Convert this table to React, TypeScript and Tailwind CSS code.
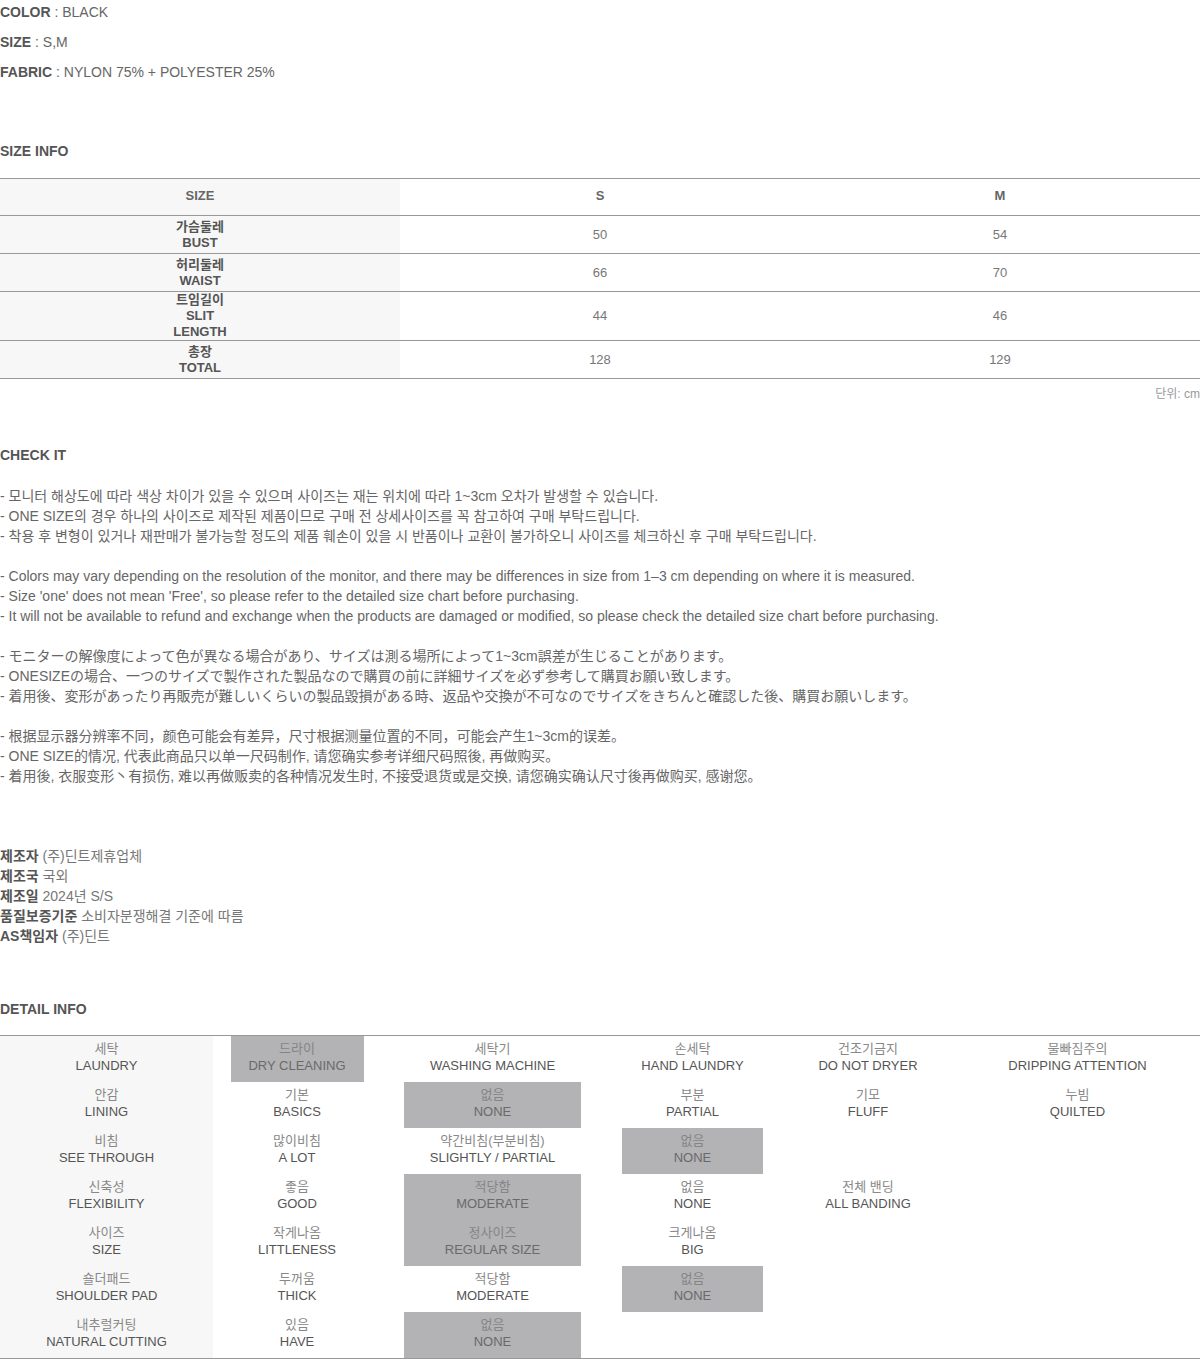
import React from "react";

const KR = "font-['Liberation_Sans','Noto_Sans_CJK_KR',sans-serif]";
const JP = "font-['Liberation_Sans','Noto_Sans_CJK_JP',sans-serif]";
const SC = "font-['Liberation_Sans','Noto_Sans_CJK_SC',sans-serif]";

type SizeRow = { label: string[]; s: string; m: string };
const sizeRows: SizeRow[] = [
  { label: ["가슴둘레", "BUST"], s: "50", m: "54" },
  { label: ["허리둘레", "WAIST"], s: "66", m: "70" },
  { label: ["트임길이", "SLIT", "LENGTH"], s: "44", m: "46" },
  { label: ["총장", "TOTAL"], s: "128", m: "129" },
];

type Cell = { ko: string; en: string; hl?: string } | null;

const detailRows: Cell[][] = [
  [
    { ko: "세탁", en: "LAUNDRY" },
    { ko: "드라이", en: "DRY CLEANING", hl: "w-[133px]" },
    { ko: "세탁기", en: "WASHING MACHINE" },
    { ko: "손세탁", en: "HAND LAUNDRY" },
    { ko: "건조기금지", en: "DO NOT DRYER" },
    { ko: "물빠짐주의", en: "DRIPPING ATTENTION" },
  ],
  [
    { ko: "안감", en: "LINING" },
    { ko: "기본", en: "BASICS" },
    { ko: "없음", en: "NONE", hl: "w-[177px]" },
    { ko: "부분", en: "PARTIAL" },
    { ko: "기모", en: "FLUFF" },
    { ko: "누빔", en: "QUILTED" },
  ],
  [
    { ko: "비침", en: "SEE THROUGH" },
    { ko: "많이비침", en: "A LOT" },
    { ko: "약간비침(부분비침)", en: "SLIGHTLY / PARTIAL" },
    { ko: "없음", en: "NONE", hl: "w-[141px]" },
    null,
    null,
  ],
  [
    { ko: "신축성", en: "FLEXIBILITY" },
    { ko: "좋음", en: "GOOD" },
    { ko: "적당함", en: "MODERATE", hl: "w-[177px]" },
    { ko: "없음", en: "NONE" },
    { ko: "전체 밴딩", en: "ALL BANDING" },
    null,
  ],
  [
    { ko: "사이즈", en: "SIZE" },
    { ko: "작게나옴", en: "LITTLENESS" },
    { ko: "정사이즈", en: "REGULAR SIZE", hl: "w-[177px]" },
    { ko: "크게나옴", en: "BIG" },
    null,
    null,
  ],
  [
    { ko: "숄더패드", en: "SHOULDER PAD" },
    { ko: "두꺼움", en: "THICK" },
    { ko: "적당함", en: "MODERATE" },
    { ko: "없음", en: "NONE", hl: "w-[141px]" },
    null,
    null,
  ],
  [
    { ko: "내추럴커팅", en: "NATURAL CUTTING" },
    { ko: "있음", en: "HAVE" },
    { ko: "없음", en: "NONE", hl: "w-[177px]" },
    null,
    null,
    null,
  ],
];

function DetailCell({ cell, first }: { cell: Cell; first: boolean }) {
  const base = first ? "bg-[#f7f7f7]" : "";
  if (!cell) return <div className={`h-[46px] ${base}`} />;
  const content = (
    <div className="pt-[4px] text-center">
      <div className={`text-[13px] leading-[17px] ${cell.hl ? "text-[#858585]" : "text-[#888]"}`}>{cell.ko}</div>
      <div className={`text-[13px] leading-[17px] ${cell.hl ? "text-[#6a6a6a]" : "text-[#555]"}`}>{cell.en}</div>
    </div>
  );
  if (cell.hl) {
    return (
      <div className={`h-[46px] flex justify-center ${base}`}>
        <div className={`${cell.hl} h-full bg-[#b3b2b4]`}>{content}</div>
      </div>
    );
  }
  return <div className={`h-[46px] ${base}`}>{content}</div>;
}

export default function App() {
  return (
    <div className={`w-[1200px] bg-white text-[#666] ${KR}`}>
      {/* product info */}
      <div className="flex flex-col gap-[6px] text-[14px] leading-[24px] text-[#666]">
        <div><span className="font-bold text-[#555]">COLOR</span> : BLACK</div>
        <div><span className="font-bold text-[#555]">SIZE</span> : S,M</div>
        <div><span className="font-bold text-[#555]">FABRIC</span> : NYLON 75% + POLYESTER 25%</div>
      </div>

      {/* size info */}
      <div className="mt-[57px] text-[14px] leading-[20px] font-bold text-[#555]">SIZE INFO</div>
      <div className="mt-[17px] border-t border-[#999]">
        <div className="grid grid-cols-3 border-b border-[#999] min-h-[37px] items-stretch text-[13px] font-bold text-[#666]">
          <div className="bg-[#f7f7f7] flex items-center justify-center pb-[3px]">SIZE</div>
          <div className="flex items-center justify-center pb-[3px]">S</div>
          <div className="flex items-center justify-center pb-[3px]">M</div>
        </div>
        {sizeRows.map((r, i) => (
          <div key={i} className="grid grid-cols-3 border-b border-[#999] min-h-[38px] items-stretch">
            <div className="bg-[#f7f7f7] flex flex-col items-center justify-center text-[13px] leading-[16px] font-bold text-[#555]">
              {r.label.map((l, j) => (
                <div key={j}>{l}</div>
              ))}
            </div>
            <div className="flex items-center justify-center text-[13px] text-[#777]">{r.s}</div>
            <div className="flex items-center justify-center text-[13px] text-[#777]">{r.m}</div>
          </div>
        ))}
      </div>
      <div className="mt-[7px] text-right text-[12px] leading-[16px] text-[#999]">단위: cm</div>

      {/* check it */}
      <div className="mt-[43px] text-[14px] leading-[20px] font-bold text-[#555]">CHECK IT</div>
      <div className="mt-[21px] text-[14px] leading-[20px] text-[#666]">
        <div>- 모니터 해상도에 따라 색상 차이가 있을 수 있으며 사이즈는 재는 위치에 따라 1~3cm 오차가 발생할 수 있습니다.</div>
        <div>- ONE SIZE의 경우 하나의 사이즈로 제작된 제품이므로 구매 전 상세사이즈를 꼭 참고하여 구매 부탁드립니다.</div>
        <div>- 착용 후 변형이 있거나 재판매가 불가능할 정도의 제품 훼손이 있을 시 반품이나 교환이 불가하오니 사이즈를 체크하신 후 구매 부탁드립니다.</div>
        <div className="h-[20px]" />
        <div>- Colors may vary depending on the resolution of the monitor, and there may be differences in size from 1–3 cm depending on where it is measured.</div>
        <div>- Size 'one' does not mean 'Free', so please refer to the detailed size chart before purchasing.</div>
        <div>- It will not be available to refund and exchange when the products are damaged or modified, so please check the detailed size chart before purchasing.</div>
        <div className="h-[20px]" />
        <div className={JP}>
          <div>- モニターの解像度によって色が異なる場合があり、サイズは測る場所によって1~3cm誤差が生じることがあります。</div>
          <div>- ONESIZEの場合、一つのサイズで製作された製品なので購買の前に詳細サイズを必ず参考して購買お願い致します。</div>
          <div>- 着用後、変形があったり再販売が難しいくらいの製品毀損がある時、返品や交換が不可なのでサイズをきちんと確認した後、購買お願いします。</div>
        </div>
        <div className="h-[20px]" />
        <div className={SC}>
          <div>- 根据显示器分辨率不同，颜色可能会有差异，尺寸根据测量位置的不同，可能会产生1~3cm的误差。</div>
          <div>- ONE SIZE的情况, 代表此商品只以单一尺码制作, 请您确实参考详细尺码照後, 再做购买。</div>
          <div>- 着用後, 衣服变形丶有损伤, 难以再做贩卖的各种情况发生时, 不接受退货或是交换, 请您确实确认尺寸後再做购买, 感谢您。</div>
        </div>
      </div>

      {/* maker */}
      <div className="mt-[60px] text-[14px] leading-[20px] text-[#777]">
        <div><span className="font-bold text-[#555]">제조자</span> (주)딘트제휴업체</div>
        <div><span className="font-bold text-[#555]">제조국</span> 국외</div>
        <div><span className="font-bold text-[#555]">제조일</span> 2024년 S/S</div>
        <div><span className="font-bold text-[#555]">품질보증기준</span> 소비자분쟁해결 기준에 따름</div>
        <div><span className="font-bold text-[#555]">AS책임자</span> (주)딘트</div>
      </div>

      {/* detail info */}
      <div className="mt-[53px] text-[14px] leading-[20px] font-bold text-[#555]">DETAIL INFO</div>
      <div className="mt-[16px] border-t border-b border-[#999]">
        {detailRows.map((row, i) => (
          <div key={i} className="grid grid-cols-[213px_168px_223px_177px_174px_1fr]">
            {row.map((c, j) => (
              <DetailCell key={j} cell={c} first={j === 0} />
            ))}
          </div>
        ))}
      </div>
    </div>
  );
}
